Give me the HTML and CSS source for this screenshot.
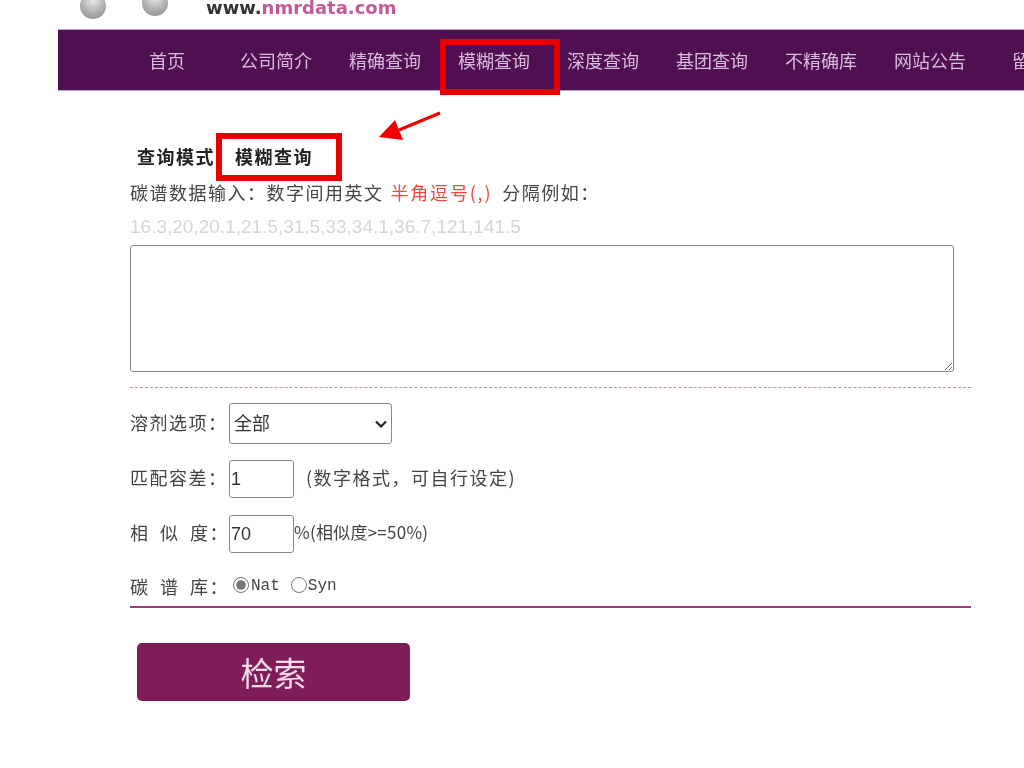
FILE: index.html
```html
<!DOCTYPE html>
<html lang="zh-CN">
<head>
<meta charset="utf-8">
<title>模糊查询</title>
<link rel="stylesheet" href="styles.css">
</head>
<body>
<header class="top">
  <span class="ball ball-a"></span>
  <span class="ball ball-b"></span>
  <span class="url">www.<em>nmrdata.com</em></span>
</header>
<nav class="nav">
  <a>首页</a><a>公司简介</a><a>精确查询</a><a>模糊查询</a><a>深度查询</a><a>基团查询</a><a>不精确库</a><a>网站公告</a><a>留言板</a>
</nav>
<main class="main">
  <h1 class="mode"><span>查询模式</span><span class="mode-value">模糊查询</span></h1>
  <p class="desc">碳谱数据输入：数字间用英文<b>半角逗号(,)</b>分隔例如：</p>
  <p class="sample">16.3,20,20.1,21.5,31.5,33,34.1,36.7,121,141.5</p>
  <textarea class="data"></textarea>
  <div class="options">
    <div class="row row-solvent"><label>溶剂选项：</label><span class="select-wrap"><select class="solvent"><option>全部</option></select><svg class="chev" width="12" height="8" viewBox="0 0 12 8"><path d="M1 1.5 L6 6.5 L11 1.5" fill="none" stroke="#222" stroke-width="2.2"/></svg></span></div>
    <div class="row row-tol"><label>匹配容差：</label><input class="num" value="1"><span class="hint">(数字格式，可自行设定)</span></div>
    <div class="row row-sim"><label class="spaced">相 似 度：</label><input class="num" value="70"><span class="pct">%(相似度&gt;=50%)</span></div>
    <div class="row row-lib"><label class="spaced">碳 谱 库：</label><input type="radio" name="lib" checked><span class="lib">Nat</span><input type="radio" name="lib"><span class="lib">Syn</span></div>
  </div>
  <button class="go">检索</button>
</main>
<span class="mark mark-nav"></span>
<span class="mark mark-mode"></span>
<svg class="arrow" width="64" height="36" viewBox="0 0 64 36"><path d="M62 3 L21 20" stroke="#ee0000" stroke-width="3" fill="none"/><path d="M1 27 L17 10 L25 30 Z" fill="#ee0000"/></svg>
</body>
</html>
```
FILE: styles.css
```css
* { box-sizing: border-box; }
html, body { margin: 0; height: 768px; overflow: hidden; background: #fff; }
body {
  position: relative;
  font-family: "Noto Sans CJK SC", "Liberation Sans", sans-serif;
  font-size: 18px;
  color: #444;
  filter: blur(0.4px);
}
.top { position: relative; height: 29px; overflow: hidden; }
.ball {
  position: absolute;
  width: 26px;
  height: 26px;
  border-radius: 50%;
  background: radial-gradient(circle at 50% 30%, #e8e8e8, #a8a8a8 60%, #8c8c8c);
}
.ball-a { left: 80px; top: -7px; }
.ball-b { left: 142px; top: -10px; }
.url {
  position: absolute;
  left: 206px;
  top: 0;
  font: bold 18px/16px "DejaVu Sans", sans-serif;
  color: #333;
  white-space: nowrap;
}
.url em { font-style: normal; color: #c45a98; }
.nav {
  display: flex;
  margin-left: 58px;
  height: 62px;
  padding-left: 54.5px;
  background: #500f50;
  border-top: 1px solid #c9a4cc;
  border-bottom: 1px solid #c9a4cc;
  white-space: nowrap;
  overflow: hidden;
}
.nav a {
  flex: 0 0 109px;
  text-align: center;
  line-height: 60px;
  color: #d8bcdc;
}
.main { width: 841px; margin-left: 130px; padding-top: 49px; letter-spacing: 1.5px; }
.mode {
  display: flex;
  gap: 20px;
  margin: 0;
  padding-left: 7px;
  font-size: 18px;
  line-height: 32px;
  padding-bottom: 2px;
  font-weight: bold;
  color: #222;
  letter-spacing: 1.5px;
}
.desc { margin: 0; height: 36px; line-height: 36px; white-space: nowrap; }
.desc b { margin: 0 10px 0 7px; font-weight: normal; color: #ee4a40; letter-spacing: 1.8px; }
.sample {
  margin: 0;
  height: 35px;
  line-height: 34px;
  font-family: "Liberation Sans", sans-serif;
  font-size: 19px;
  letter-spacing: 0;
  color: #d6d6d6;
}
.data {
  display: block;
  width: 824px;
  height: 127px;
  border: 1px solid #8a8a8a;
  border-radius: 3px;
  background: #fff;
}
.options {
  margin-top: 15px;
  padding-top: 15px;
  height: 221px;
  border-top: 1px dashed #d08aa0;
  border-bottom: 2px solid #a03a78;
}
.row { display: flex; align-items: center; white-space: nowrap; }
.row label { width: 99px; flex: none; padding-bottom: 4px; }
.row-lib label { padding-bottom: 0; }
.row-solvent { height: 41px; }
.row-tol { height: 38px; margin-top: 16px; }
.row-sim { height: 38px; margin-top: 17px; }
.row-lib { height: 28px; margin-top: 19px; }
.spaced { word-spacing: 5px; }
.select-wrap { position: relative; display: block; width: 163px; height: 41px; }
.solvent {
  appearance: none;
  display: block;
  width: 163px;
  height: 41px;
  padding: 0 0 4px 4px;
  font: 18px "Noto Sans CJK SC", sans-serif;
  color: #333;
  background: #fff;
  border: 1px solid #8a8a8a;
  border-radius: 3px;
}
.chev { position: absolute; right: 5px; top: 17px; }
.num {
  width: 65px;
  height: 38px;
  padding: 0 1px;
  font: 18px "Liberation Sans", sans-serif;
  color: #333;
  border: 1px solid #8a8a8a;
  border-radius: 3px;
}
.hint { margin-left: 12px; padding-bottom: 4px; }
.pct { font-size: 17px; letter-spacing: 0.25px; padding-bottom: 5px; }
input[type="radio"] {
  width: 16px;
  height: 16px;
  margin: 0 2px 2px 4px;
  accent-color: #777;
}
.lib {
  margin-right: 7px;
  font: 16px "Liberation Mono", monospace;
  letter-spacing: 0;
  color: #444;
}
.lib + input[type="radio"] { margin-left: 4px; margin-right: 1px; }
.go {
  display: block;
  width: 273px;
  height: 58px;
  margin: 35px 0 0 7px;
  border: 0;
  border-radius: 5px;
  background: #7f1d58;
  color: #f4dcea;
  font: 33px "Noto Sans CJK SC", sans-serif;
}
.mark { position: absolute; border: 6px solid #e60000; }
.mark-nav { left: 440px; top: 39px; width: 120px; height: 56px; }
.mark-mode { left: 216px; top: 133px; width: 126px; height: 48px; }
.arrow { position: absolute; left: 378px; top: 110px; }
```
